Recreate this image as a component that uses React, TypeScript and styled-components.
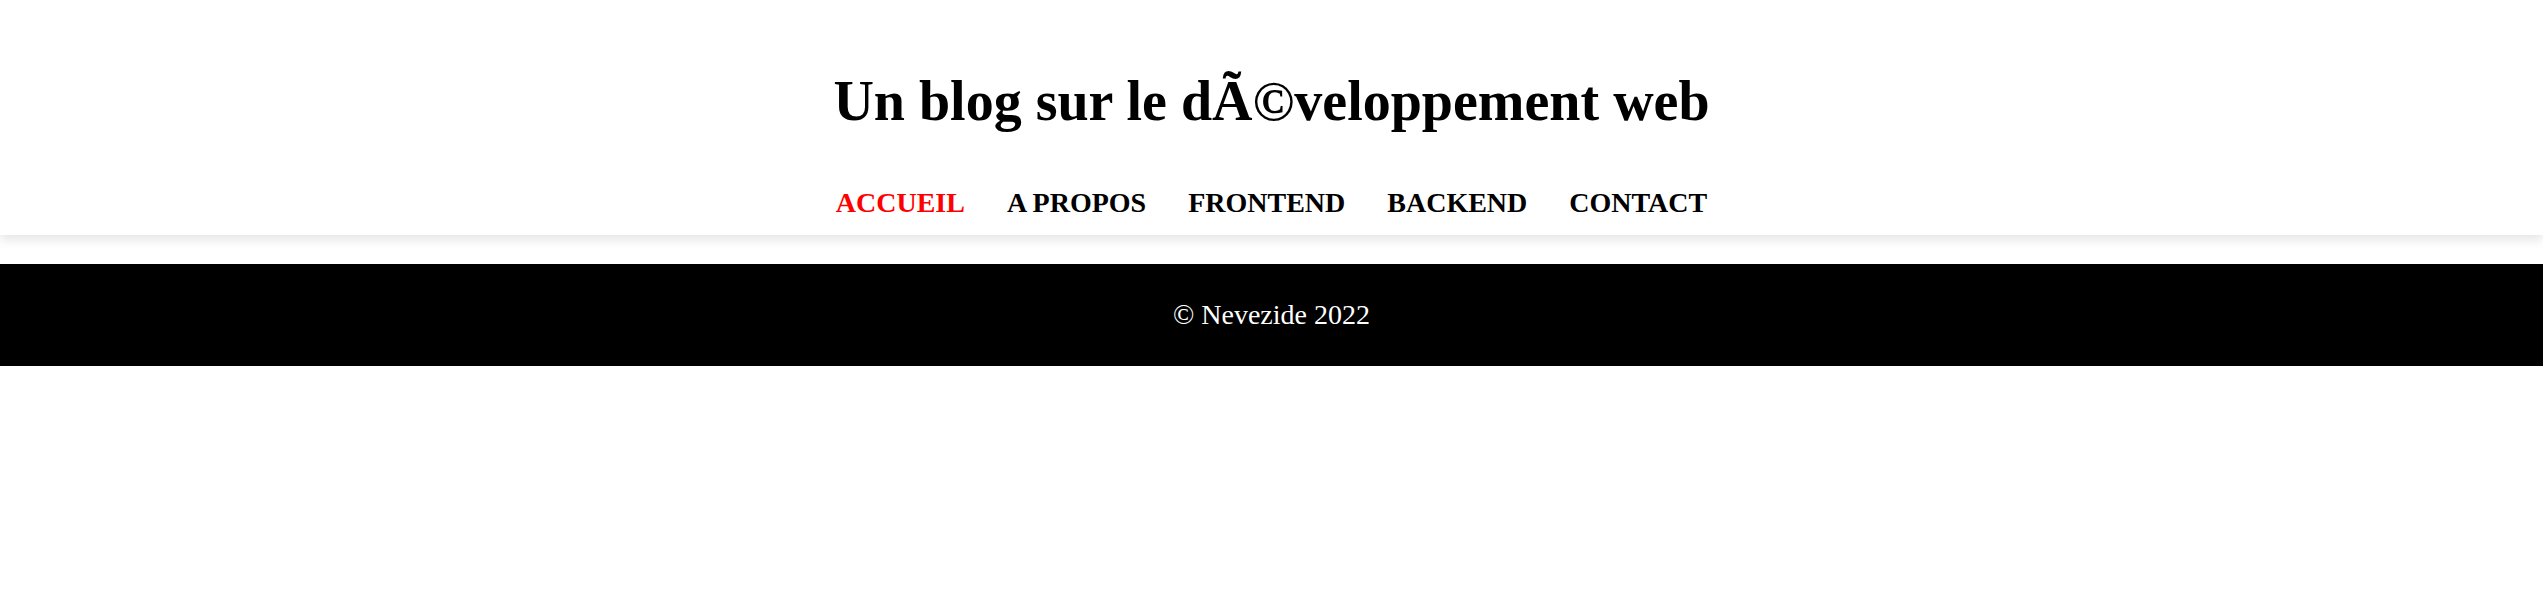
import styled, { createGlobalStyle } from 'styled-components';

const GlobalStyle = createGlobalStyle`
  body {
    margin: 0;
    background: #fff;
    font-family: "Liberation Serif", "Times New Roman", serif;
  }
`;

const Header = styled.header`
  background: #fff;
  padding: 69px 0 16px;
  box-shadow: 0 5px 10px rgba(0, 0, 0, 0.1);
  text-align: center;
`;

const Title = styled.h1`
  margin: 0;
  font-size: 56px;
  line-height: 64px;
  font-weight: 700;
  color: #000;
`;

const Menu = styled.ul`
  list-style: none;
  margin: 54px 0 0;
  padding: 0;
  display: flex;
  justify-content: center;
  gap: 42px;
`;

const MenuItem = styled.li<{ $active?: boolean }>`
  font-size: 28px;
  line-height: 32px;
  font-weight: 700;
  text-transform: uppercase;
  color: ${(p) => (p.$active ? '#ff0000' : '#000')};
  cursor: pointer;
`;

const Footer = styled.footer`
  margin-top: 29px;
  height: 102px;
  background: #000;
  color: #fff;
  display: flex;
  align-items: center;
  justify-content: center;
  font-size: 28px;
`;

const links = ['Accueil', 'A propos', 'Frontend', 'Backend', 'Contact'];

export default function App() {
  return (
    <>
      <GlobalStyle />
      <Header>
        <Title>Un blog sur le dÃ©veloppement web</Title>
        <nav>
          <Menu>
            {links.map((l, i) => (
              <MenuItem key={l} $active={i === 0}>
                {l}
              </MenuItem>
            ))}
          </Menu>
        </nav>
      </Header>
      <Footer>© Nevezide 2022</Footer>
    </>
  );
}
